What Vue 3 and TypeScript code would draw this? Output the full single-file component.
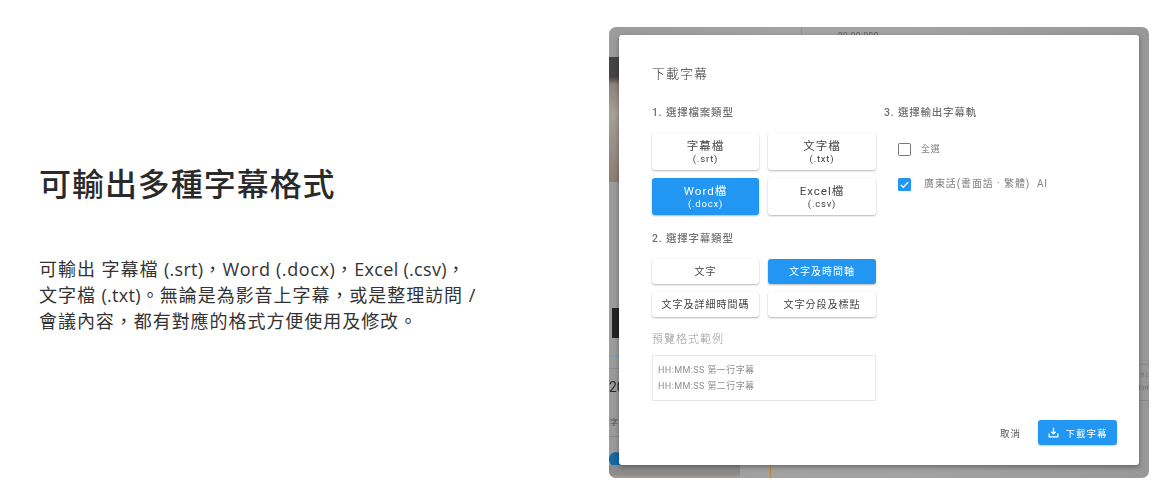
<script setup lang="ts">
interface Opt { name: string; ext?: string; active?: boolean }
const fileTypes: Opt[] = [
  { name: '字幕檔', ext: '(.srt)' },
  { name: '文字檔', ext: '(.txt)' },
  { name: 'Word檔', ext: '(.docx)', active: true },
  { name: 'Excel檔', ext: '(.csv)' },
]
const subTypes: Opt[] = [
  { name: '文字' },
  { name: '文字及時間軸', active: true },
  { name: '文字及詳細時間碼' },
  { name: '文字分段及標點' },
]
</script>

<template>
  <main class="page">
    <section class="intro">
      <h1 class="heading">可輸出多種字幕格式</h1>
      <p class="desc">可輸出 字幕檔 <span class="lat">(.srt)</span>，<span class="lat wide">Word (.docx)</span>，<span class="lat">Excel (.csv)</span>，<br />文字檔 <span class="lat">(.txt)</span>。無論是為影音上字幕，或是整理訪問 /<br />會議內容，都有對應的格式方便使用及修改。</p>
    </section>

    <section class="shot">
      <div class="bg">
        <i class="photo"></i>
        <i class="dark-box"></i>
        <i class="blue-line"></i>
        <span class="bg-num">20</span>
        <i class="row-line r1"></i>
        <span class="bg-small">字</span>
        <i class="row-line r2"></i>
        <i class="blue-dot"></i>
        <i class="v-line"></i>
        <span class="bg-time">00:00:000</span>
        <i class="bottom-left"></i>
        <i class="orange"></i>
        <i class="right-l1"></i>
        <i class="right-l2"></i>
        <span class="right-t1">并上</span>
        <span class="right-t2">Ent</span>
      </div>

      <div class="dialog">
        <h2 class="dialog-title">下載字幕</h2>
        <div class="columns">
          <div class="col-left">
            <h3 class="step">1. 選擇檔案類型</h3>
            <div class="opts file-opts">
              <button v-for="o in fileTypes" :key="o.name" class="opt" :class="{ active: o.active }">
                <span class="opt-name">{{ o.name }}</span>
                <span class="opt-ext">{{ o.ext }}</span>
              </button>
            </div>
            <h3 class="step step2">2. 選擇字幕類型</h3>
            <div class="opts sub-opts">
              <button v-for="o in subTypes" :key="o.name" class="opt" :class="{ active: o.active }">
                <span class="opt-sub">{{ o.name }}</span>
              </button>
            </div>
            <div class="preview-label">預覽格式範例</div>
            <div class="preview">
              <div>HH:MM:SS 第一行字幕</div>
              <div>HH:MM:SS 第二行字幕</div>
            </div>
          </div>
          <div class="col-right">
            <h3 class="step">3. 選擇輸出字幕軌</h3>
            <label class="check first">
              <span class="box"></span>
              <span class="check-text">全選</span>
            </label>
            <label class="check second">
              <span class="box on">
                <svg viewBox="0 0 14 14" width="14" height="14"><path d="M3 7.4l2.7 2.6L11 4.4" fill="none" stroke="#fff" stroke-width="1.4" /></svg>
              </span>
              <span class="check-text long">廣東話(書面語 · 繁體)&nbsp; AI</span>
            </label>
          </div>
        </div>
        <footer class="actions">
          <button class="cancel">取消</button>
          <button class="download">
            <svg viewBox="0 0 24 24" width="13" height="13"><path d="M12 3v11M8 10.5l4 4 4-4" fill="none" stroke="#fff" stroke-width="2.4" /><path d="M4 14v6h16v-6" fill="none" stroke="#fff" stroke-width="2.4" /></svg>
            <span>下載字幕</span>
          </button>
        </footer>
      </div>
    </section>
  </main>
</template>

<style>
html, body { margin: 0; background: #fff; overflow: hidden; }
</style>

<style scoped>
.page {
  display: flex;
  width: 1161px;
  height: 497px;
  background: #fff;
  box-sizing: border-box;
  padding-top: 27px;
  overflow: hidden;
}
.intro {
  width: 609px;
  flex: none;
  box-sizing: border-box;
  padding: 133px 0 0 39px;
  font-family: "Open Sans", "Noto Sans CJK TC", sans-serif;
  color: #2b2b2b;
}
.heading {
  margin: 0;
  font-family: "Noto Sans CJK TC", sans-serif;
  font-size: 32px;
  line-height: 44px;
  font-weight: 500;
  letter-spacing: 0.95px;
  color: #2a2a2a;
}
.desc {
  margin: 52px 0 0;
  font-size: 18px;
  line-height: 26px;
  white-space: nowrap;
  letter-spacing: 0.95px;
  font-weight: 400;
  color: #333;
}
.lat { letter-spacing: 0.3px; }
.lat.wide { letter-spacing: 0.6px; }
.shot {
  position: relative;
  width: 540px;
  height: 451px;
  flex: none;
  box-sizing: border-box;
  padding: 8px 10px 13px;
  border-radius: 7px;
  overflow: hidden;
  background: linear-gradient(90deg, #9b9b9b, #a3a3a3 35%, #a2a2a2 60%, #989898);
  font-family: Roboto, "Noto Sans CJK TC", sans-serif;
}
.bg { position: absolute; inset: 0; filter: blur(0.6px); }
.bg i, .bg span { position: absolute; display: block; }
.photo { left: 0; top: 30px; width: 10px; height: 125px; background: linear-gradient(180deg, #464344 0 16%, #8d8378 22%, #a5a09a 45%, #8b7e72 100%); }
.dark-box { left: 3px; top: 281px; width: 7px; height: 30px; background: #232323; }
.blue-line { left: 0; top: 328px; width: 10px; height: 2px; background: #7e9cb0; }
.bg-num { left: 0; top: 352px; font-size: 14px; line-height: 16px; color: #2b2b2b; }
.row-line { left: 0; width: 10px; height: 1px; background: #8d8d8d; }
.r1 { top: 341px; }
.r2 { top: 409px; }
.bg-small { left: 1px; top: 391px; font-size: 8px; line-height: 10px; color: #4b4b4b; white-space: nowrap; }
.blue-dot { left: 0; top: 425px; width: 14px; height: 15px; border-radius: 50%; background: #1668a6; }
.v-line { left: 192px; top: 0; width: 1px; height: 8px; background: #8f8f8f; }
.bg-time { left: 229px; top: 4px; font-size: 8px; line-height: 8px; letter-spacing: 0.6px; color: #5a5a5a; }
.bottom-left { left: 0; bottom: 0; width: 131px; height: 13px; background: linear-gradient(180deg, #8b8b8b 0 70%, #a89f8d 100%); }
.orange { left: 161px; bottom: 0; width: 1px; height: 13px; background: #b5842d; }
.right-l1 { right: 0; top: 337px; width: 10px; height: 1px; background: #8a8a8a; }
.right-l2 { right: 0; top: 373px; width: 10px; height: 1px; background: #8a8a8a; }
.right-t1 { right: 0; top: 342px; font-size: 4.5px; line-height: 12px; color: #6e6e6e; white-space: nowrap; }
.right-t2 { right: 0; top: 355px; font-size: 7px; line-height: 12px; color: #6e6e6e; }

.dialog {
  position: relative;
  height: 430px;
  box-sizing: border-box;
  padding: 30px 22px 20px 33px;
  background: #fff;
  border-radius: 3px;
  box-shadow: 0 2px 5px rgba(0, 0, 0, 0.35);
  display: flex;
  flex-direction: column;
  color: #555;
  filter: blur(0.35px);
}
.dialog-title {
  margin: 0;
  font-size: 13px;
  line-height: 18px;
  font-weight: 300;
  letter-spacing: 1px;
  color: #333;
}
.columns {
  display: flex;
  gap: 8px;
  margin-top: 23px;
  flex: 1;
}
.col-left { width: 224px; }
.col-right { flex: 1; }
.step {
  margin: 0;
  font-size: 10.5px;
  line-height: 14px;
  font-weight: 500;
  letter-spacing: 0.8px;
  color: #707070;
}
.opts { display: grid; grid-template-columns: 107px 108px; gap: 8px 9px; }
.file-opts { margin-top: 13px; grid-auto-rows: 37px; }
.sub-opts { margin-top: 13px; grid-auto-rows: 25px; }
.step2 { margin-top: 17px; }
.opt {
  border: none;
  padding: 0;
  margin: 0;
  background: #fff;
  border-radius: 3px;
  font-family: inherit;
  color: #444;
  box-shadow: 0 1px 2px rgba(0, 0, 0, 0.28), 0 0 1px rgba(0, 0, 0, 0.08);
  display: flex;
  flex-direction: column;
  align-items: center;
  justify-content: center;
}
.opt.active { background: #2196f3; color: #fff; }
.opt-name { font-size: 11.5px; line-height: 14px; letter-spacing: 1px; font-weight: 400; }
.opt-ext { font-size: 9.5px; line-height: 12px; letter-spacing: 0.8px; }
.opt-sub { font-size: 10px; line-height: 14px; letter-spacing: 1px; }
.preview-label {
  margin-top: 15px;
  font-size: 11px;
  line-height: 15px;
  letter-spacing: 1px;
  color: #9a9a9a;
  font-weight: 300;
}
.preview {
  margin-top: 8px;
  height: 46px;
  box-sizing: border-box;
  border: 1px solid #e6e6e6;
  padding: 5.5px 5px;
  font-size: 9px;
  line-height: 16.5px;
  color: #8e8e8e;
  letter-spacing: 0.4px;
}
.check { display: flex; align-items: center; margin-left: 14px; height: 14px; }
.first { margin-top: 22px; }
.second { margin-top: 21px; }
.box {
  width: 13px;
  height: 13px;
  box-sizing: border-box;
  border: 1.5px solid #757575;
  border-radius: 1.5px;
  flex: none;
  display: block;
}
.box.on { background: #2196f3; border: none; }
.box.on svg { display: block; width: 13px; height: 13px; }
.check-text { margin-left: 10px; font-size: 9px; line-height: 12px; color: #808080; letter-spacing: 0.7px; white-space: nowrap; }
.check-text.long { margin-left: 13px; font-size: 10px; letter-spacing: 0.9px; }
.actions { display: flex; justify-content: flex-end; align-items: center; height: 25px; }
.cancel {
  border: none;
  background: none;
  padding: 0;
  margin-right: 17px;
  font-family: inherit;
  font-size: 9.5px;
  letter-spacing: 1px;
  color: #555;
}
.download {
  width: 79px;
  height: 25px;
  border: none;
  padding: 0;
  border-radius: 3px;
  background: #2196f3;
  color: #fff;
  font-family: inherit;
  font-size: 9.5px;
  letter-spacing: 1px;
  display: flex;
  align-items: center;
  justify-content: center;
  gap: 5px;
  box-shadow: 0 1px 2px rgba(0, 0, 0, 0.2);
}
</style>
